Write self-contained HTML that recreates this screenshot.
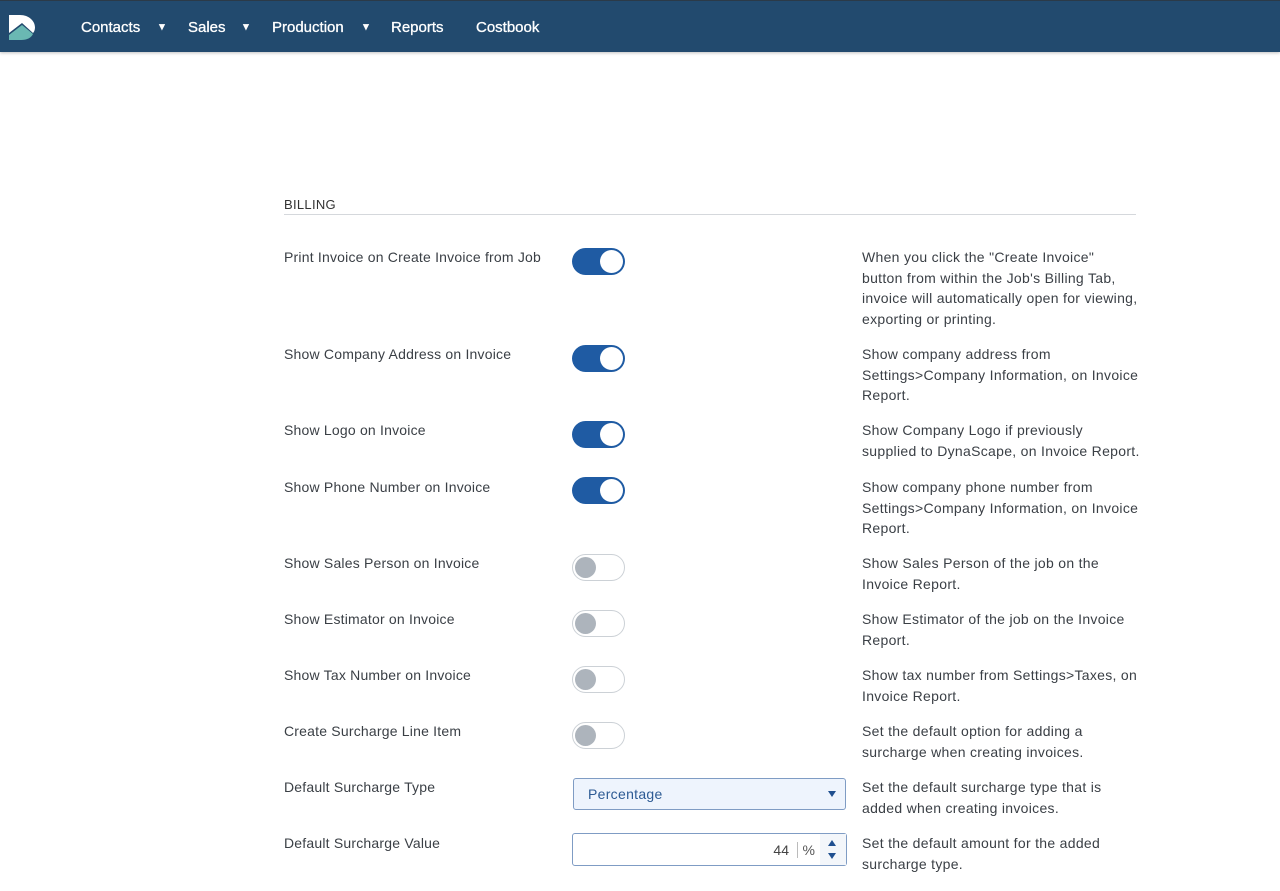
<!DOCTYPE html>
<html><head><style>
*{box-sizing:border-box;margin:0;padding:0}
body{width:1280px;height:891px;overflow:hidden;background:#fff;font-family:"Liberation Sans",sans-serif;color:#3a3f45;position:relative}
.nav{position:absolute;left:0;top:0;width:1280px;height:52px;background:#224a6e;border-top:1px solid #2b3a48;box-shadow:0 1px 3px rgba(0,0,0,.25)}
.nav span{position:absolute;top:18px;color:#fff;font-size:15px;-webkit-text-stroke:0.3px #fff}
.nav .c{font-size:10px;top:21px}
.h{position:absolute;left:284px;top:197px;font-size:13px;color:#333;letter-spacing:.3px}
.line{position:absolute;left:284px;top:214px;width:852px;height:1px;background:#d5d8dc}
.l{position:absolute;left:284px;font-size:14px;line-height:20px;letter-spacing:.2px}
.d{position:absolute;left:862px;white-space:nowrap;font-size:14px;line-height:20.5px;letter-spacing:.3px}
.t{position:absolute;left:572px;width:53px;height:27px;border-radius:14px}
.on{background:#1f5ba3}
.on::after{content:"";position:absolute;right:2px;top:2px;width:23px;height:23px;border-radius:50%;background:#fff}
.off{background:#fff;border:1px solid #ccd1d6}
.off::after{content:"";position:absolute;left:2px;top:2px;width:21px;height:21px;border-radius:50%;background:#adb4bc}
.sel{position:absolute;left:573px;top:778px;width:273px;height:32px;border:1px solid #7f9cc4;border-radius:3px;background:#eef4fd;color:#2c5a94;font-size:14px;padding:7px 14px;letter-spacing:.3px}
.sel i{position:absolute;right:9px;top:12px;border-left:4px solid transparent;border-right:4px solid transparent;border-top:6px solid #1f4f8f}
.num{position:absolute;left:572px;top:833px;width:275px;height:33px;border:1px solid #7f9cc4;border-radius:3px;font-size:14px}
</style></head><body>
<div class="nav">
<svg style="position:absolute;left:9px;top:14px" width="26" height="25" viewBox="0 0 26 25"><path d="M0 0H11C20 0 26 6 26 12.5C26 15 25 17 24 18L13 8L0 18Z" fill="#fff"/><path d="M0 20L13 10L24 19C22 23 18 25 12 25H0Z" fill="#6ab8b3"/></svg>
<span style="left:81px">Contacts</span><span class="c" style="left:157px">▼</span>
<span style="left:188px">Sales</span><span class="c" style="left:241px">▼</span>
<span style="left:272px">Production</span><span class="c" style="left:361px">▼</span>
<span style="left:391px">Reports</span>
<span style="left:476px">Costbook</span>
</div>
<div class="h">BILLING</div><div class="line"></div>

<div class="l" style="top:247px">Print Invoice on Create Invoice from Job</div>
<div class="t on" style="top:248px"></div>
<div class="d" style="top:247px">When you click the "Create Invoice"<br>button from within the Job's Billing Tab,<br>invoice will automatically open for viewing,<br>exporting or printing.</div>

<div class="l" style="top:344px">Show Company Address on Invoice</div>
<div class="t on" style="top:345px"></div>
<div class="d" style="top:344px">Show company address from<br>Settings&gt;Company Information, on Invoice<br>Report.</div>

<div class="l" style="top:420px">Show Logo on Invoice</div>
<div class="t on" style="top:421px"></div>
<div class="d" style="top:420px">Show Company Logo if previously<br>supplied to DynaScape, on Invoice Report.</div>

<div class="l" style="top:477px">Show Phone Number on Invoice</div>
<div class="t on" style="top:477px"></div>
<div class="d" style="top:477px">Show company phone number from<br>Settings&gt;Company Information, on Invoice<br>Report.</div>

<div class="l" style="top:553px">Show Sales Person on Invoice</div>
<div class="t off" style="top:554px"></div>
<div class="d" style="top:553px">Show Sales Person of the job on the<br>Invoice Report.</div>

<div class="l" style="top:609px">Show Estimator on Invoice</div>
<div class="t off" style="top:610px"></div>
<div class="d" style="top:609px">Show Estimator of the job on the Invoice<br>Report.</div>

<div class="l" style="top:665px">Show Tax Number on Invoice</div>
<div class="t off" style="top:666px"></div>
<div class="d" style="top:665px">Show tax number from Settings&gt;Taxes, on<br>Invoice Report.</div>

<div class="l" style="top:721px">Create Surcharge Line Item</div>
<div class="t off" style="top:722px"></div>
<div class="d" style="top:721px">Set the default option for adding a<br>surcharge when creating invoices.</div>

<div class="l" style="top:777px">Default Surcharge Type</div>
<div class="sel">Percentage<i></i></div>
<div class="d" style="top:777px">Set the default surcharge type that is<br>added when creating invoices.</div>

<div class="l" style="top:833px">Default Surcharge Value</div>
<div class="num">
<span style="position:absolute;right:57px;top:8px;color:#444">44</span>
<span style="position:absolute;right:48px;top:8px;width:1px;height:16px;background:#bbb"></span>
<span style="position:absolute;right:31px;top:8px;color:#555">%</span>
<div style="position:absolute;right:0;top:0;width:26px;height:31px;background:#f3f6fa"></div>
<i style="position:absolute;right:10px;top:6px;border-left:4px solid transparent;border-right:4px solid transparent;border-bottom:6px solid #1f4f8f"></i>
<i style="position:absolute;right:10px;top:19px;border-left:4px solid transparent;border-right:4px solid transparent;border-top:6px solid #1f4f8f"></i>
</div>
<div class="d" style="top:833px">Set the default amount for the added<br>surcharge type.</div>
</body></html>
